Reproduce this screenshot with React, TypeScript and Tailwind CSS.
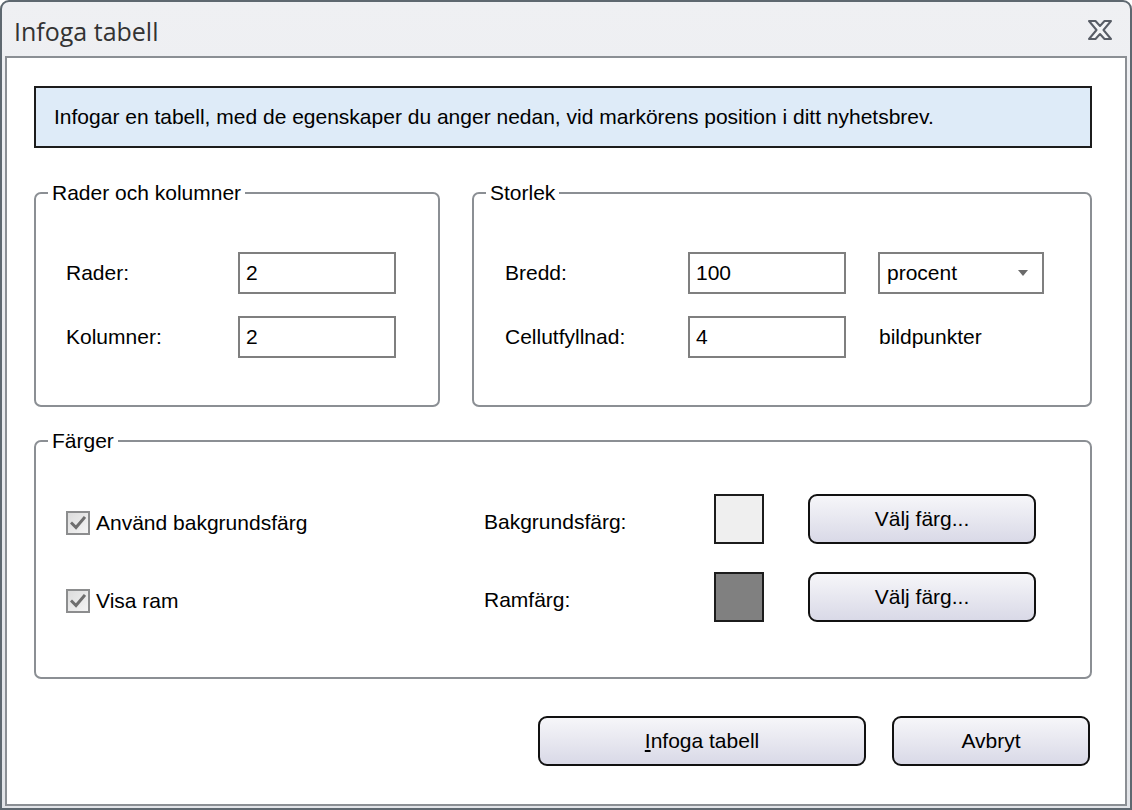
import React from "react";

const body = "font-['Liberation_Sans',Arial,sans-serif] text-[21px] text-black";

function TextBox({ value }: { value: string }) {
  return (
    <div className="w-[158px] h-[42px] border-2 border-[#7f7f7f] bg-white flex items-center pl-[6px]">
      <span className={body}>{value}</span>
    </div>
  );
}

function Check({ label }: { label: string }) {
  return (
    <div className="flex items-center gap-[6px]">
      <div className="w-[24px] h-[24px] border-2 border-[#8c8d8e] bg-gradient-to-br from-[#dcdcdc] to-[#f4f4f4] flex items-center justify-center">
        <svg width="16" height="16" viewBox="0 0 16 16">
          <path d="M2 8.5 L6 12.5 L14 3" fill="none" stroke="#6e6e6e" strokeWidth="3" strokeLinecap="square" />
        </svg>
      </div>
      <span className={body}>{label}</span>
    </div>
  );
}

function Btn({ children, w }: { children: React.ReactNode; w: string }) {
  return (
    <button
      className={`${w} h-[50px] rounded-[9px] border-2 border-[#111] bg-gradient-to-b from-[#f6f6f9] to-[#d9d9e7] flex items-center justify-center ${body}`}
    >
      {children}
    </button>
  );
}

function Group({ title, className, children }: { title: string; className: string; children: React.ReactNode }) {
  return (
    <fieldset className={`border-2 border-[#8b8f94] rounded-[7px] ${className}`}>
      <legend className={`ml-[12px] px-[4px] leading-[24px] ${body} text-[#1a1a1a]`}>{title}</legend>
      {children}
    </fieldset>
  );
}

export default function App() {
  return (
    <div className="w-[1132px] h-[810px] bg-white">
      <div className="w-full h-full rounded-t-[9px] border-2 border-[#5e6870] bg-gradient-to-b from-[#eff0f3] to-[#e2e4e8] flex flex-col">
        {/* title bar */}
        <div className="h-[54px] flex items-center justify-between pl-[12px] pr-[18px] shrink-0">
          <span className="font-['Open_Sans',sans-serif] text-[25px] text-[#333] pt-[5px]">Infoga tabell</span>
          <svg width="24" height="20" viewBox="0 0 24 20" className="mt-[1px]">
            <polygon
              points="1,1 7.5,1 12,6 16.5,1 23,1 15.5,10 23,19 16.5,19 12,14 7.5,19 1,19 8.5,10"
              fill="#f3f4f6"
              stroke="#585d66"
              strokeWidth="2"
              strokeLinejoin="round"
            />
          </svg>
        </div>

        {/* client area */}
        <div className="flex-1 mx-[3px] mb-[2px] border-2 border-[#8b8f94] bg-white pl-[27px] pt-[28px]">
          <div className="w-[1058px] flex flex-col">
            <div className="h-[62px] border-2 border-[#1c1c1c] bg-[#deebf8] flex items-center pl-[18px]">
              <span className={body}>
                Infogar en tabell, med de egenskaper du anger nedan, vid markörens position i ditt nyhetsbrev.
              </span>
            </div>

            <div className="flex gap-[32px] mt-[33px]">
              <Group title="Rader och kolumner" className="w-[406px] h-[226px]">
                <div className="flex flex-col gap-[22px] pt-[47px] pl-[30px]">
                  <div className="flex items-center">
                    <span className={`${body} w-[172px]`}>Rader:</span>
                    <TextBox value="2" />
                  </div>
                  <div className="flex items-center">
                    <span className={`${body} w-[172px]`}>Kolumner:</span>
                    <TextBox value="2" />
                  </div>
                </div>
              </Group>

              <Group title="Storlek" className="w-[620px] h-[226px]">
                <div className="flex flex-col gap-[22px] pt-[47px] pl-[31px]">
                  <div className="flex items-center">
                    <span className={`${body} w-[183px]`}>Bredd:</span>
                    <TextBox value="100" />
                    <div className="ml-[32px] w-[166px] h-[42px] border-2 border-[#7f7f7f] bg-white flex items-center justify-between pl-[7px] pr-[14px]">
                      <span className={body}>procent</span>
                      <svg width="10" height="6" viewBox="0 0 10 6">
                        <polygon points="0,0 10,0 5,6" fill="#6a6a6a" />
                      </svg>
                    </div>
                  </div>
                  <div className="flex items-center">
                    <span className={`${body} w-[183px]`}>Cellutfyllnad:</span>
                    <TextBox value="4" />
                    <span className={`${body} ml-[33px]`}>bildpunkter</span>
                  </div>
                </div>
              </Group>
            </div>

            <Group title="Färger" className="w-[1058px] h-[250px] mt-[22px]">
              <div className="flex flex-col gap-[28px] pt-[41px] pl-[30px]">
                <div className="flex items-center">
                  <div className="w-[418px] pt-[8px]">
                    <Check label="Använd bakgrundsfärg" />
                  </div>
                  <span className={`${body} w-[230px] pt-[6px]`}>Bakgrundsfärg:</span>
                  <div className="w-[50px] h-[50px] border-2 border-[#1c1c1c] bg-[#efefef]" />
                  <div className="ml-[44px]">
                    <Btn w="w-[228px]">Välj färg...</Btn>
                  </div>
                </div>
                <div className="flex items-center">
                  <div className="w-[418px] pt-[8px]">
                    <Check label="Visa ram" />
                  </div>
                  <span className={`${body} w-[230px] pt-[6px]`}>Ramfärg:</span>
                  <div className="w-[50px] h-[50px] border-2 border-[#1c1c1c] bg-[#808080]" />
                  <div className="ml-[44px]">
                    <Btn w="w-[228px]">Välj färg...</Btn>
                  </div>
                </div>
              </div>
            </Group>

            <div className="flex justify-end gap-[26px] mt-[37px] pr-[2px]">
              <Btn w="w-[328px]">
                <span>
                  <span className="underline underline-offset-2">I</span>nfoga tabell
                </span>
              </Btn>
              <Btn w="w-[198px]">Avbryt</Btn>
            </div>
          </div>
        </div>
      </div>
    </div>
  );
}
